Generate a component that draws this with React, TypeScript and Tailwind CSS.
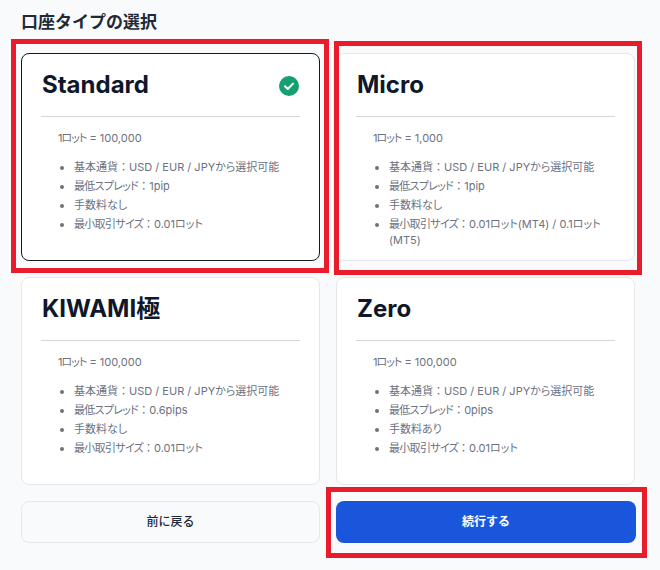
const plans = [
  {
    name: "Standard",
    lot: "100,000",
    items: ["基本通貨：USD / EUR / JPYから選択可能", "最低スプレッド：1pip", "手数料なし", "最小取引サイズ：0.01ロット"],
    selected: true,
  },
  {
    name: "Micro",
    lot: "1,000",
    items: ["基本通貨：USD / EUR / JPYから選択可能", "最低スプレッド：1pip", "手数料なし", "最小取引サイズ：0.01ロット(MT4) / 0.1ロット(MT5)"],
    selected: false,
  },
  {
    name: "KIWAMI極",
    lot: "100,000",
    items: ["基本通貨：USD / EUR / JPYから選択可能", "最低スプレッド：0.6pips", "手数料なし", "最小取引サイズ：0.01ロット"],
    selected: false,
  },
  {
    name: "Zero",
    lot: "100,000",
    items: ["基本通貨：USD / EUR / JPYから選択可能", "最低スプレッド：0pips", "手数料あり", "最小取引サイズ：0.01ロット"],
    selected: false,
  },
];

function Check() {
  return (
    <svg width="20" height="20" viewBox="0 0 20 20">
      <circle cx="10" cy="10" r="10" fill="#16a06f" />
      <path d="M6 10.3l2.8 2.7L14 7.6" fill="none" stroke="#fff" strokeWidth="2" strokeLinecap="round" strokeLinejoin="round" />
    </svg>
  );
}

function Item({ text }: { text: string }) {
  const [label, value] = text.split("：");
  if (!value) return <>{text}</>;
  return (
    <>
      <span className={label.length > 4 ? "tracking-[-0.7px]" : ""}>{label}</span>
      <span className="[font-feature-settings:normal]">：</span>
      {value}
    </>
  );
}

export default function App() {
  return (
    <div className="relative h-[570px] w-[660px] overflow-hidden bg-[#f8fafc] pl-[21px] pr-[25px] pt-[11px] font-['Inter','Noto_Sans_CJK_JP',sans-serif]">
      <h2 className="h-[42px] text-[17px] leading-[22px] font-semibold text-[#1f2937]">口座タイプの選択</h2>
      <div className="grid grid-cols-2 gap-4">
        {plans.map((p) => (
          <div
            key={p.name}
            className={`h-[208px] rounded-lg border bg-white px-[19px] pt-[14px] ${p.selected ? "border-[#111827]" : "border-[#e5e7eb]"}`}
          >
            <div className="flex h-[49px] items-start justify-between border-b border-[#d4d7dc]">
              <h3 className="ml-px text-2xl leading-[34px] font-bold text-[#0f172a]">{p.name}</h3>
              {p.selected && (
                <div className="pt-[8px] pr-[1px]">
                  <Check />
                </div>
              )}
            </div>
            <div className="pl-[17px] pr-2 text-[11px] leading-4 text-[#6b7280] [font-feature-settings:'palt']">
              <p className="mt-[13px]">
                <span className="tracking-[-1px]">1ロット</span> = {p.lot}
              </p>
              <ul className="mt-[13px] list-disc space-y-[3px] pl-4">
                {p.items.map((t) => (
                  <li key={t} className="marker:text-[#6b7280]">
                    <Item text={t} />
                  </li>
                ))}
              </ul>
            </div>
          </div>
        ))}
      </div>
      <div className="mt-4 grid grid-cols-2 gap-4">
        <button className="h-[42px] rounded-lg border border-[#e5e7eb] bg-[#f8fafc] text-xs font-medium text-[#1f2937]">前に戻る</button>
        <button className="h-[42px] w-[300px] rounded-lg bg-[#1a56db] text-xs font-semibold text-white">続行する</button>
      </div>
      {/* red annotation boxes */}
      <div className="absolute left-[11px] top-[39px] h-[234px] w-[318px] border-[5px] border-[#e81c2a]" />
      <div className="absolute left-[334px] top-[41px] h-[234px] w-[308px] border-[5px] border-[#e81c2a]" />
      <div className="absolute left-[326px] top-[487px] h-[71px] w-[321px] border-[5px] border-[#e81c2a]" />
    </div>
  );
}
